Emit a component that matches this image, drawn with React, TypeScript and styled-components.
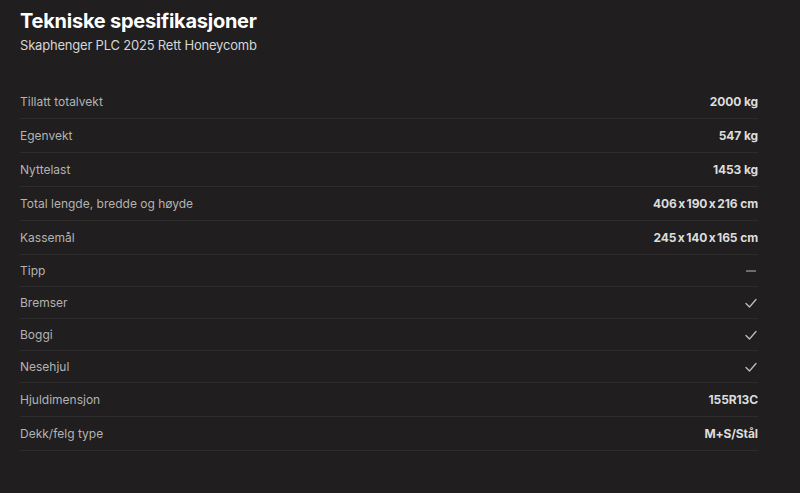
import React from "react";
import styled, { createGlobalStyle } from "styled-components";

const Global = createGlobalStyle`
  html, body { margin: 0; padding: 0; background: #201e1e; }
  body {
    font-family: Inter, "Noto Sans", sans-serif;
    font-feature-settings: "calt" 0;
    -webkit-font-smoothing: antialiased;
  }
`;

const Page = styled.div`
  width: 800px;
  height: 493px;
  box-sizing: border-box;
  padding: 8px 42px 0 20px;
  background: #201e1e;
  color: #e8e8e8;
`;

const Title = styled.h1`
  margin: 0;
  font-size: 20px;
  line-height: 26px;
  font-weight: 700;
  letter-spacing: -0.25px;
  color: #ffffff;
`;

const Subtitle = styled.p`
  margin: 2px 0 0;
  font-size: 13px;
  line-height: 18px;
  letter-spacing: -0.2px;
  color: #d6d6d6;
`;

const Table = styled.div`
  margin-top: 31px;
  display: flex;
  flex-direction: column;
`;

const Row = styled.div<{ $compact?: boolean }>`
  display: flex;
  align-items: center;
  justify-content: space-between;
  height: ${(p) => (p.$compact ? 32 : 34)}px;
  border-bottom: 1px solid #2d2b2b;
  box-sizing: border-box;
`;

const Label = styled.span`
  font-size: 12px;
  color: #b3b3b3;
`;

const Value = styled.span`
  font-size: 12px;
  font-weight: 700;
  letter-spacing: -0.1px;
  color: #dcdcdc;
  display: flex;
  align-items: center;
`;

const Times = styled.span`
  margin: 0 1.5px;
`;

const Check = () => (
  <svg width="14" height="14" viewBox="0 0 14 14" fill="none">
    <path d="M2 7.5 L5.5 11 L12 3.5" stroke="#bdbdbd" strokeWidth="1.3" strokeLinecap="round" strokeLinejoin="round" />
  </svg>
);

const Dash = () => (
  <svg width="14" height="14" viewBox="0 0 14 14" fill="none">
    <path d="M2.5 7 H11.5" stroke="#bdbdbd" strokeWidth="1.2" strokeLinecap="round" />
  </svg>
);

const Dims = ({ parts, unit }: { parts: string[]; unit: string }) => (
  <>
    {parts.map((p, i) => (
      <React.Fragment key={i}>
        {i > 0 && <Times>x</Times>}
        {p}
      </React.Fragment>
    ))}
    &nbsp;{unit}
  </>
);

type Spec = { label: string; value: React.ReactNode; icon?: boolean };

const specs: Spec[] = [
  { label: "Tillatt totalvekt", value: "2000 kg" },
  { label: "Egenvekt", value: "547 kg" },
  { label: "Nyttelast", value: "1453 kg" },
  { label: "Total lengde, bredde og høyde", value: <Dims parts={["406", "190", "216"]} unit="cm" /> },
  { label: "Kassemål", value: <Dims parts={["245", "140", "165"]} unit="cm" /> },
  { label: "Tipp", value: <Dash />, icon: true },
  { label: "Bremser", value: <Check />, icon: true },
  { label: "Boggi", value: <Check />, icon: true },
  { label: "Nesehjul", value: <Check />, icon: true },
  { label: "Hjuldimensjon", value: "155R13C" },
  { label: "Dekk/felg type", value: "M+S/Stål" },
];

export default function App() {
  return (
    <Page>
      <Global />
      <Title>Tekniske spesifikasjoner</Title>
      <Subtitle>Skaphenger PLC 2025 Rett Honeycomb</Subtitle>
      <Table>
        {specs.map((s) => (
          <Row key={s.label} $compact={s.icon}>
            <Label>{s.label}</Label>
            <Value>{s.value}</Value>
          </Row>
        ))}
      </Table>
    </Page>
  );
}
